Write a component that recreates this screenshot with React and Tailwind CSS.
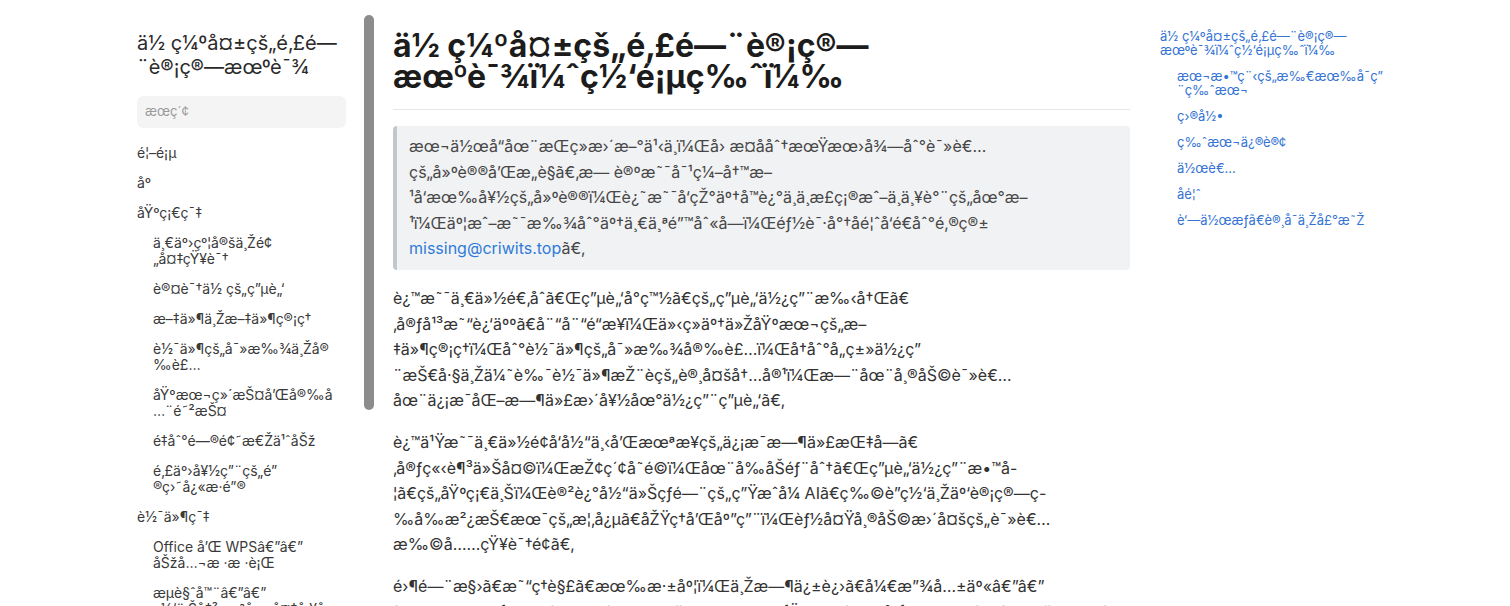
import React from "react";

const enc = new TextEncoder();
const dec = new TextDecoder("windows-1252");
// UTF-8 text shown through a windows-1252 decoder (as on the page); C1 controls are zero-width there.
const strip = (s) => s.replace(/[\u0080-\u009f]/g, "");
const m = (s) => strip(dec.decode(enc.encode(s))).replace(/\u201D(?=.)/g, "\u201D\u200B");

// Split text into the page's lines. "⏎n" = line ends after n bytes of the next character.
function lines(src) {
  const tokens = src.split(/⏎(\d)/);
  const bytes = [];
  const cuts = [];
  tokens.forEach((tk, i) => {
    if (i % 2 === 1) cuts.push(bytes.length + Number(tk));
    else bytes.push(...enc.encode(tk));
  });
  const out = [];
  let prev = 0;
  [...cuts, bytes.length].forEach((c) => {
    let s = strip(dec.decode(new Uint8Array(bytes.slice(prev, c))));
    if (s.endsWith("\u00AD")) s = s.slice(0, -1) + "-";
    out.push(s);
    prev = c;
  });
  return out;
}

const NAV = [
  { t: "首页" },
  { t: "序" },
  { t: "基础篇" },
  { t: "一些约定与预备知识", sub: true },
  { t: "认识你的电脑", sub: true },
  { t: "文件与文件管理", sub: true },
  { t: "软件的寻找与安装", sub: true },
  { t: "基本维护和安全防护", sub: true },
  { t: "遇到问题怎么办", sub: true },
  { t: "那些好用的键盘快捷键", sub: true },
  { t: "软件篇" },
  { t: "Office 和 WPS——办公样样行", sub: true },
  { t: "浏览器——网上冲浪必备工具", sub: true },
  { t: "输入法——打字也有学问", sub: true },
];

const TOC = [
  { t: "你缺失的那门计算机课（网页版）" },
  { t: "本教程的所有可用版本", sub: true },
  { t: "目录", sub: true },
  { t: "版本修订", sub: true },
  { t: "作者", sub: true },
  { t: "反馈", sub: true },
  { t: "著作权、许可与声明", sub: true },
];

const BQ = lines(
  "本作品在持续更新之中，因此十分期望得到读者⏎0的建议和意见。无论是对编写⏎2方向有好的建议，还是发现了叙述中不正确或不严谨的地⏎2方，亦或是找到了一个错别字，都请将反馈发送到邮箱"
);

const P1 = lines(
  "这是一份适合「电脑小白」的电脑使用手册⏎2。它平易近人、娓娓道来，介绍了从基本的⏎2文件管理，到软件的寻找安装，再到各类使⏎2用技巧与优良软件推荐的许多内容，旨在帮助读者⏎0在信息化时代更好地使用电脑。"
);

const P2 = lines(
  "这也是一份面向当下和未来的信息时代指南⏎2。它立足今天，探索变革，在前半部分「电脑使用教⏎2学」的基础上，讲述当今热门的生成式 AI、物联网与云计算⏎2等前沿技术的概念、原理和应用，能够帮助更多的读者⏎0扩充知识面。"
);

const P3 = lines("零门槛、易理解、有深度，与时俱进、开放共享——⏎0这是本书一直以来追求的目标，也是我们对每一位读者的承诺。");

function Lines({ items }) {
  return items.map((l, i) => (
    <span key={i} className="block whitespace-nowrap">
      {l}
    </span>
  ));
}

export default function App() {
  return (
    <div className="flex h-[606px] w-[1510px] overflow-hidden break-words bg-white font-['Inter',sans-serif] text-[#333333]">
      {/* Left sidebar */}
      <aside className="w-[364px] shrink-0 pl-[137px] pr-[18px] pt-[31px]">
        <div className="mr-[-12px] text-[20px] leading-6 text-[#2b2b2b]">
          {m("你缺失的那门计算机课")}
        </div>
        <div className="mt-[17px] flex h-8 items-center rounded-md bg-[#f4f4f5] px-2 text-[13px] text-[#9a9a9a]">
          {m("搜索")}
        </div>
        <nav className="mt-[10px] pr-[2px] text-sm leading-4 text-[#3a3a3a]">
          {NAV.map((it, i) => (
            <div key={i} className={it.sub ? "py-[7px] pl-4" : "py-[7px]"}>
              {m(it.t)}
            </div>
          ))}
        </nav>
      </aside>

      {/* Sidebar scrollbar */}
      <div className="w-[10px] shrink-0 pt-[15px]">
        <div className="h-[395px] w-[10px] rounded-full bg-[#8c8c8c]" />
      </div>

      {/* Main content */}
      <main className="w-[756px] shrink-0 pl-[19px] pt-[30px]">
        <h1 className="border-b border-[#e6e7e9] pb-[17px] text-[32px] font-bold leading-[31px] text-[#1c1c1c]">
          {m("你缺失的那门计算机课（网页版）")}
        </h1>
        <blockquote className="mt-4 rounded border-l-4 border-[#c3c6cc] bg-[#f1f2f4] px-3 py-2 text-base leading-[1.6] text-[#474747]">
          <Lines items={BQ} />
          <span className="block whitespace-nowrap">
            <a className="text-[#2f7bd9]">missing@criwits.top</a>
            {m("。")}
          </span>
        </blockquote>
        <p className="mt-4 text-base leading-[1.6]">
          <Lines items={P1} />
        </p>
        <p className="mt-4 text-base leading-[1.6]">
          <Lines items={P2} />
        </p>
        <p className="mt-4 text-base leading-[1.6]">
          <Lines items={P3} />
        </p>
      </main>

      {/* Right TOC */}
      <aside className="ml-[30px] w-[230px] shrink-0 pt-[23px] text-[13px] leading-[14px] text-[#3574d4]">
        {TOC.map((it, i) => (
          <div key={i} className={it.sub ? "py-[6px] pl-[17px]" : "py-[6px]"}>
            {m(it.t)}
          </div>
        ))}
      </aside>
    </div>
  );
}
